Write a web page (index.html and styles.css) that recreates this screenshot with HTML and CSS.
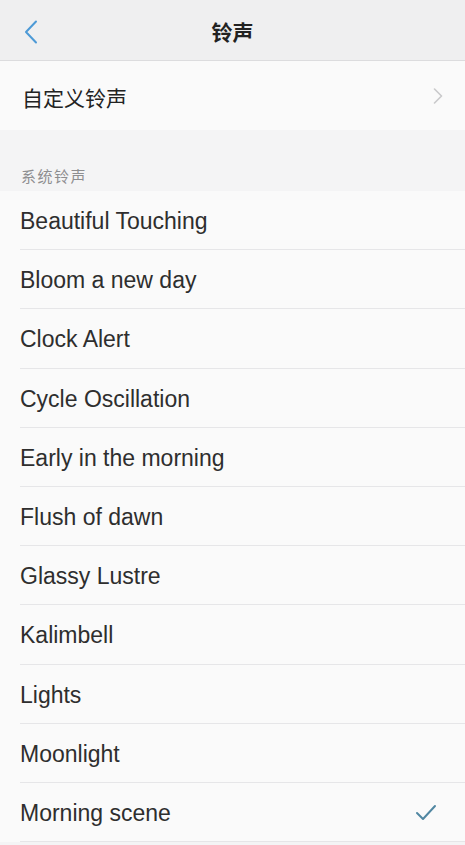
FILE: index.html
```html
<!DOCTYPE html>
<html lang="zh-CN">
<head>
<meta charset="utf-8">
<title>铃声</title>
<link rel="stylesheet" href="styles.css">
</head>
<body>
<div class="page">
  <div class="nav">
    <span class="nav-back">
      <svg width="14" height="24" viewBox="0 0 14 24"><path d="M12 1.5 L2 12 L12 22.5" fill="none" stroke="#4d9ad6" stroke-width="2" stroke-linecap="round" stroke-linejoin="round"/></svg>
    </span>
    <div class="nav-title">铃声</div>
  </div>

  <div class="custom">
    <span class="custom-name">自定义铃声</span>
    <svg class="arrow" width="10" height="16" viewBox="0 0 10 16"><path d="M1.5 1 L8.5 8 L1.5 15" fill="none" stroke="#c9c9cb" stroke-width="1.6" stroke-linecap="round" stroke-linejoin="round"/></svg>
  </div>

  <div class="section">系统铃声</div>

  <ul class="list">
    <li>Beautiful Touching</li>
    <li>Bloom a new day</li>
    <li>Clock Alert</li>
    <li>Cycle Oscillation</li>
    <li>Early in the morning</li>
    <li>Flush of dawn</li>
    <li>Glassy Lustre</li>
    <li>Kalimbell</li>
    <li>Lights</li>
    <li>Moonlight</li>
    <li class="on">Morning scene
      <svg class="check" width="22" height="17" viewBox="0 0 22 17"><path d="M2 9 L8 15 L20 2" fill="none" stroke="#5187a2" stroke-width="2" stroke-linecap="round" stroke-linejoin="round"/></svg>
    </li>
  </ul>
</div>
</body>
</html>
```

FILE: styles.css
```css
html, body { margin:0; padding:0; background:#f4f4f5; }
body { font-family:"Liberation Sans", "Noto Sans CJK SC", Arial, sans-serif; color:#2b2b2b; }
.page { width:465px; min-height:845px; overflow:hidden; }

.nav { height:60px; background:#efeff0; border-bottom:1px solid #dcdcde; display:flex; align-items:center; justify-content:center; position:relative; }
.nav-back { position:absolute; left:24px; top:20px; }
.nav-title { font-size:21px; font-weight:bold; color:#222; padding-top:2px; }

.custom { height:69px; background:#fafafa; display:flex; align-items:center; justify-content:space-between; padding:0 22px; }
.custom-name { font-size:21px; color:#222; padding-top:3px; }

.section { height:61px; box-sizing:border-box; padding:35px 0 0 21px; font-size:15px; letter-spacing:1.5px; color:#8e8e90; }

.list { list-style:none; margin:0; padding:0 0 0 20px; background:#fafafa; }
.list li { height:59.2px; box-sizing:border-box; border-bottom:1px solid #e6e6e8; display:flex; align-items:center; justify-content:space-between; padding:3px 28px 0 0; font-size:23px; color:#2e2e2e; }
.check { margin-top:-1px; }
```
